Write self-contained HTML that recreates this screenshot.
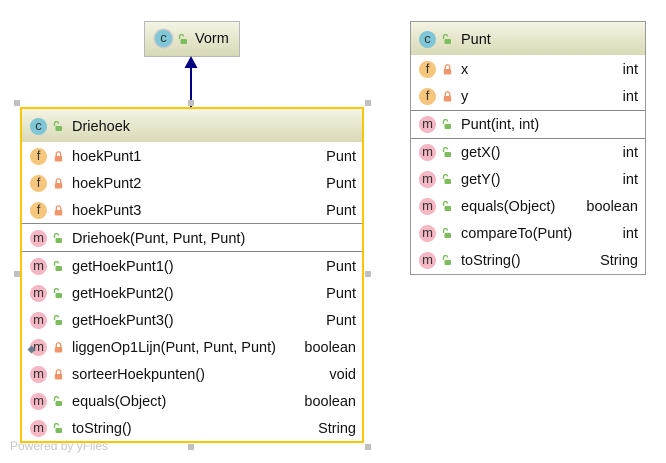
<!DOCTYPE html>
<html><head><meta charset="utf-8"><style>
body{margin:0;width:666px;height:463px;background:#fff;position:relative;overflow:hidden;font-family:"Liberation Sans",sans-serif;font-size:14px;color:#111}
.a{position:absolute}
.box{position:absolute;box-sizing:border-box}
.hdr{position:absolute;background:linear-gradient(#f4f4e4,#d9d9b7)}
.ic{position:absolute;width:17px;height:17px;border-radius:50%;font-size:13px;line-height:16px;text-align:center;color:#333}
.c{background:#7fc6d6}.f{background:#f6c67c}.m{background:#f4b7c3}
.t{position:absolute;height:27px;line-height:28px;white-space:nowrap;font-size:14.5px}
.r{text-align:right}
.sep{position:absolute;height:1px;background:#888}
.h{position:absolute;width:6px;height:6px;background:#c0c0c0}
</style></head><body>
<svg width="0" height="0" style="position:absolute">
<defs>
<g id="pub"><path d="M1.5 5 V2.5 a2 2 0 0 1 4 0" fill="none" stroke="#7dbd5e" stroke-width="1.4"/><rect x="2.5" y="5" width="6.5" height="5" rx="1" fill="#7dbd5e"/></g>
<g id="prv"><path d="M2.3 5 V3 a2.2 2.2 0 0 1 4.4 0 V5" fill="none" stroke="#f0956a" stroke-width="1.4"/><rect x="0.8" y="5" width="7.4" height="5.5" rx="1" fill="#f0956a"/></g>
</defs></svg>

<!-- Vorm -->
<div class="box" style="left:144px;top:21px;width:96px;height:36px;border:1px solid #b8b8b8;background:linear-gradient(#f4f4e4,#d9d9b7)"></div>
<div class="ic c" style="left:155px;top:30px;box-shadow:0 0 0 1.5px #ccc">c</div>
<svg class="a" style="left:178px;top:34px" width="10" height="11"><use href="#pub"/></svg>
<div class="t" style="left:195px;top:25px">Vorm</div>
<!-- arrow -->
<div class="a" style="left:190px;top:66px;width:2px;height:42px;background:#000080"></div>
<svg class="a" style="left:184px;top:56px" width="14" height="12"><path d="M7 0 L13.5 12 L0.5 12 Z" fill="#000080"/></svg>

<!-- handles -->
<div class="h" style="left:14px;top:100px"></div>
<div class="h" style="left:188px;top:100px"></div>
<div class="h" style="left:365px;top:100px"></div>
<div class="h" style="left:14px;top:271px"></div>
<div class="h" style="left:365px;top:271px"></div>
<div class="h" style="left:188px;top:444px"></div>
<div class="h" style="left:365px;top:444px"></div>
<div class="a" style="left:10px;top:439px;font-size:12px;color:#c8c8c8">Powered by yFiles</div>

<!-- Driehoek -->
<div class="box" style="left:20px;top:107px;width:344px;height:336px;border:2px solid #fdc600"></div>
<div class="hdr" style="left:22px;top:109px;width:340px;height:33px"></div>
<div class="ic c" style="left:30px;top:118px">c</div>
<svg class="a" style="left:53px;top:121px" width="10" height="11"><use href="#pub"/></svg>
<div class="t" style="left:72px;top:113px">Driehoek</div>
<div class="sep" style="left:22px;top:223px;width:340px"></div>
<div class="sep" style="left:22px;top:251px;width:340px"></div>

<div class="ic f" style="left:30px;top:148px">f</div><svg class="a" style="left:54px;top:151px" width="10" height="11"><use href="#prv"/></svg><div class="t" style="left:72px;top:143px">hoekPunt1</div><div class="t r" style="right:310px;top:143px">Punt</div>
<div class="ic f" style="left:30px;top:175px">f</div><svg class="a" style="left:54px;top:178px" width="10" height="11"><use href="#prv"/></svg><div class="t" style="left:72px;top:170px">hoekPunt2</div><div class="t r" style="right:310px;top:170px">Punt</div>
<div class="ic f" style="left:30px;top:202px">f</div><svg class="a" style="left:54px;top:205px" width="10" height="11"><use href="#prv"/></svg><div class="t" style="left:72px;top:197px">hoekPunt3</div><div class="t r" style="right:310px;top:197px">Punt</div>
<div class="ic m" style="left:30px;top:230px">m</div><svg class="a" style="left:53px;top:233px" width="10" height="11"><use href="#pub"/></svg><div class="t" style="left:72px;top:225px">Driehoek(Punt, Punt, Punt)</div>
<div class="ic m" style="left:30px;top:258px">m</div><svg class="a" style="left:53px;top:261px" width="10" height="11"><use href="#pub"/></svg><div class="t" style="left:72px;top:253px">getHoekPunt1()</div><div class="t r" style="right:310px;top:253px">Punt</div>
<div class="ic m" style="left:30px;top:285px">m</div><svg class="a" style="left:53px;top:288px" width="10" height="11"><use href="#pub"/></svg><div class="t" style="left:72px;top:280px">getHoekPunt2()</div><div class="t r" style="right:310px;top:280px">Punt</div>
<div class="ic m" style="left:30px;top:312px">m</div><svg class="a" style="left:53px;top:315px" width="10" height="11"><use href="#pub"/></svg><div class="t" style="left:72px;top:307px">getHoekPunt3()</div><div class="t r" style="right:310px;top:307px">Punt</div>
<div class="ic m" style="left:30px;top:339px">m</div><svg class="a" style="left:27px;top:345px" width="9" height="9"><path d="M4.5 0.5 L8.5 4.5 L4.5 8.5 L0.5 4.5Z" fill="#6a7a8a"/></svg><svg class="a" style="left:54px;top:342px" width="10" height="11"><use href="#prv"/></svg><div class="t" style="left:72px;top:334px">liggenOp1Lijn(Punt, Punt, Punt)</div><div class="t r" style="right:310px;top:334px">boolean</div>
<div class="ic m" style="left:30px;top:366px">m</div><svg class="a" style="left:54px;top:369px" width="10" height="11"><use href="#prv"/></svg><div class="t" style="left:72px;top:361px">sorteerHoekpunten()</div><div class="t r" style="right:310px;top:361px">void</div>
<div class="ic m" style="left:30px;top:393px">m</div><svg class="a" style="left:53px;top:396px" width="10" height="11"><use href="#pub"/></svg><div class="t" style="left:72px;top:388px">equals(Object)</div><div class="t r" style="right:310px;top:388px">boolean</div>
<div class="ic m" style="left:30px;top:420px">m</div><svg class="a" style="left:53px;top:423px" width="10" height="11"><use href="#pub"/></svg><div class="t" style="left:72px;top:415px">toString()</div><div class="t r" style="right:310px;top:415px">String</div>

<!-- Punt -->
<div class="box" style="left:410px;top:21px;width:236px;height:254px;border:1px solid #999"></div>
<div class="hdr" style="left:411px;top:22px;width:234px;height:33px"></div>
<div class="ic c" style="left:419px;top:31px">c</div>
<svg class="a" style="left:442px;top:34px" width="10" height="11"><use href="#pub"/></svg>
<div class="t" style="left:461px;top:26px">Punt</div>
<div class="sep" style="left:411px;top:110px;width:234px"></div>
<div class="sep" style="left:411px;top:138px;width:234px"></div>
<div class="ic f" style="left:419px;top:61px">f</div><svg class="a" style="left:443px;top:64px" width="10" height="11"><use href="#prv"/></svg><div class="t" style="left:461px;top:56px">x</div><div class="t r" style="right:28px;top:56px">int</div>
<div class="ic f" style="left:419px;top:88px">f</div><svg class="a" style="left:443px;top:91px" width="10" height="11"><use href="#prv"/></svg><div class="t" style="left:461px;top:83px">y</div><div class="t r" style="right:28px;top:83px">int</div>
<div class="ic m" style="left:419px;top:116px">m</div><svg class="a" style="left:442px;top:119px" width="10" height="11"><use href="#pub"/></svg><div class="t" style="left:461px;top:111px">Punt(int, int)</div>
<div class="ic m" style="left:419px;top:144px">m</div><svg class="a" style="left:442px;top:147px" width="10" height="11"><use href="#pub"/></svg><div class="t" style="left:461px;top:139px">getX()</div><div class="t r" style="right:28px;top:139px">int</div>
<div class="ic m" style="left:419px;top:171px">m</div><svg class="a" style="left:442px;top:174px" width="10" height="11"><use href="#pub"/></svg><div class="t" style="left:461px;top:166px">getY()</div><div class="t r" style="right:28px;top:166px">int</div>
<div class="ic m" style="left:419px;top:198px">m</div><svg class="a" style="left:442px;top:201px" width="10" height="11"><use href="#pub"/></svg><div class="t" style="left:461px;top:193px">equals(Object)</div><div class="t r" style="right:28px;top:193px">boolean</div>
<div class="ic m" style="left:419px;top:225px">m</div><svg class="a" style="left:442px;top:228px" width="10" height="11"><use href="#pub"/></svg><div class="t" style="left:461px;top:220px">compareTo(Punt)</div><div class="t r" style="right:28px;top:220px">int</div>
<div class="ic m" style="left:419px;top:252px">m</div><svg class="a" style="left:442px;top:255px" width="10" height="11"><use href="#pub"/></svg><div class="t" style="left:461px;top:247px">toString()</div><div class="t r" style="right:28px;top:247px">String</div>
</body></html>
